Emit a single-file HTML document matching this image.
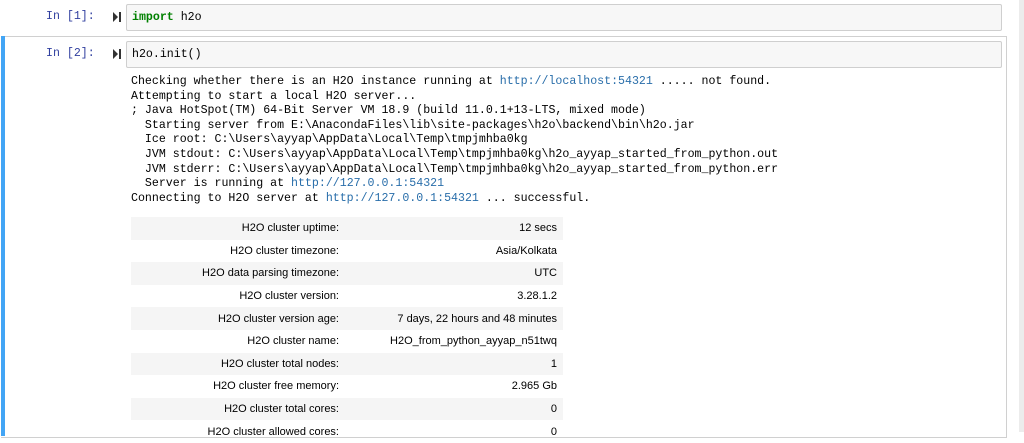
<!DOCTYPE html>
<html><head><style>
body{margin:0;background:#fff;width:1024px;height:432px;overflow:hidden;position:relative;font-family:"Liberation Sans",sans-serif}
.mono{font-family:"Liberation Mono",monospace;font-size:11.6px}
.prompt{position:absolute;left:46px;color:#303f9f;font-family:"Liberation Mono",monospace;font-size:11.6px}
.run{position:absolute;left:113px;width:8px;height:10px}
.inp{position:absolute;left:126px;width:874px;height:25px;background:#f7f7f7;border:1px solid #cfcfcf;border-radius:2px}
.inp span{position:absolute;left:5px;top:6px}
pre{position:absolute;left:131px;top:75px;margin:0;line-height:14.6px;color:#000}
a{color:#296eaa;text-decoration:none}
table{position:absolute;left:131px;top:217px;border-collapse:collapse;font-size:11px;color:#000}
td{height:22.6px;padding:0 6px;text-align:right}
td:first-child{width:202px}td:last-child{width:206px}
tr:nth-child(odd){background:#f5f5f5}
</style></head><body>
<div style="position:absolute;left:1019px;top:0;width:5px;height:432px;background:#ececec"></div>
<div class="prompt" style="top:10px">In [1]:</div>
<svg class="run" style="top:12px" viewBox="0 0 8 10"><path d="M0 0v10l5-5z M6 0h2v10h-2z" fill="#333"/></svg>
<div class="inp" style="top:4px"><span class="mono"><b style="color:#008000">import</b> h2o</span></div>
<div style="position:absolute;left:1px;top:36px;width:1005px;height:400px;border:1px solid #d0d0d0;border-left:none"></div>
<div style="position:absolute;left:1px;top:36px;width:4px;height:400px;background:#42a5f5"></div>
<div class="prompt" style="top:47px">In [2]:</div>
<svg class="run" style="top:49px" viewBox="0 0 8 10"><path d="M0 0v10l5-5z M6 0h2v10h-2z" fill="#333"/></svg>
<div class="inp" style="top:41px"><span class="mono">h2o.init()</span></div>
<pre class="mono">Checking whether there is an H2O instance running at <a>http://localhost:54321</a> ..... not found.
Attempting to start a local H2O server...
; Java HotSpot(TM) 64-Bit Server VM 18.9 (build 11.0.1+13-LTS, mixed mode)
  Starting server from E:\AnacondaFiles\lib\site-packages\h2o\backend\bin\h2o.jar
  Ice root: C:\Users\ayyap\AppData\Local\Temp\tmpjmhba0kg
  JVM stdout: C:\Users\ayyap\AppData\Local\Temp\tmpjmhba0kg\h2o_ayyap_started_from_python.out
  JVM stderr: C:\Users\ayyap\AppData\Local\Temp\tmpjmhba0kg\h2o_ayyap_started_from_python.err
  Server is running at <a>http://127.0.0.1:54321</a>
Connecting to H2O server at <a>http://127.0.0.1:54321</a> ... successful.</pre>
<table>
<tr><td>H2O cluster uptime:</td><td>12 secs</td></tr>
<tr><td>H2O cluster timezone:</td><td>Asia/Kolkata</td></tr>
<tr><td>H2O data parsing timezone:</td><td>UTC</td></tr>
<tr><td>H2O cluster version:</td><td>3.28.1.2</td></tr>
<tr><td>H2O cluster version age:</td><td>7 days, 22 hours and 48 minutes</td></tr>
<tr><td>H2O cluster name:</td><td>H2O_from_python_ayyap_n51twq</td></tr>
<tr><td>H2O cluster total nodes:</td><td>1</td></tr>
<tr><td>H2O cluster free memory:</td><td>2.965 Gb</td></tr>
<tr><td>H2O cluster total cores:</td><td>0</td></tr>
<tr><td>H2O cluster allowed cores:</td><td>0</td></tr>
</table>
</body></html>
